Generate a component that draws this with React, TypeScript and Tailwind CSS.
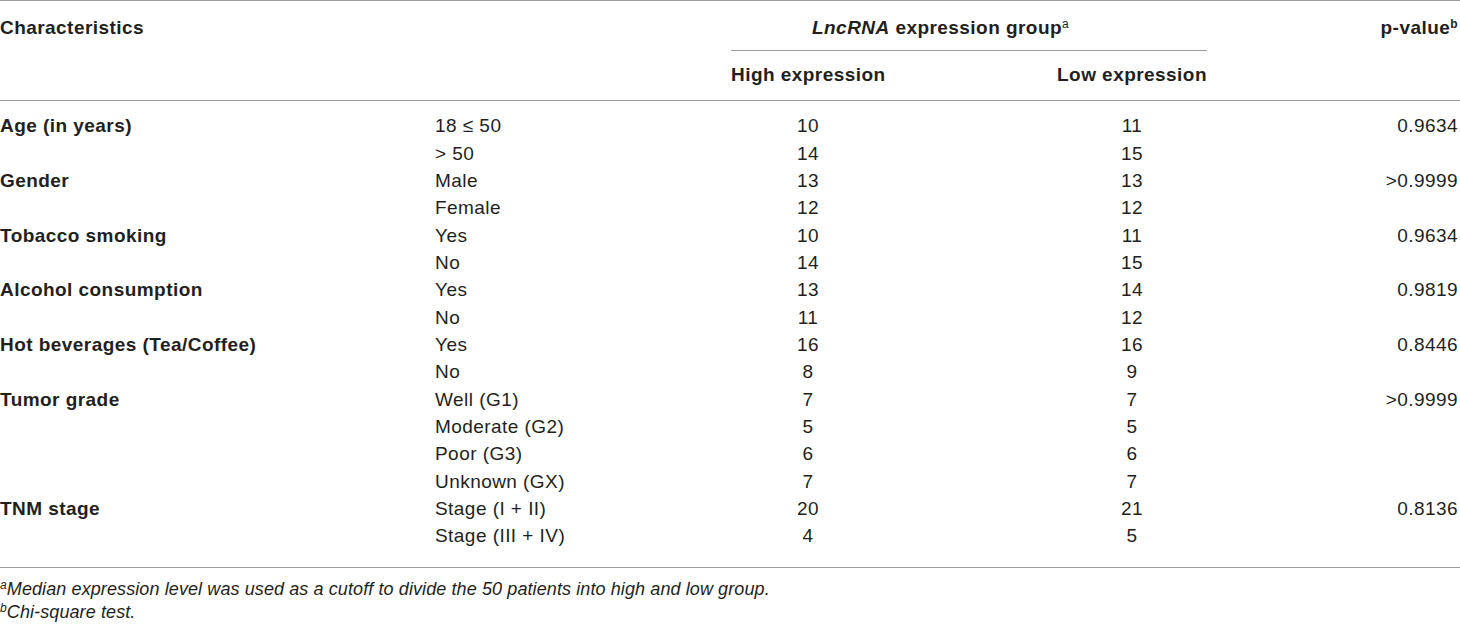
import React from "react";

type Row = { label?: string; sub: string; hi: string; lo: string; p?: string };

const rows: Row[] = [
  { label: "Age (in years)", sub: "18 \u2264 50", hi: "10", lo: "11", p: "0.9634" },
  { sub: "> 50", hi: "14", lo: "15" },
  { label: "Gender", sub: "Male", hi: "13", lo: "13", p: ">0.9999" },
  { sub: "Female", hi: "12", lo: "12" },
  { label: "Tobacco smoking", sub: "Yes", hi: "10", lo: "11", p: "0.9634" },
  { sub: "No", hi: "14", lo: "15" },
  { label: "Alcohol consumption", sub: "Yes", hi: "13", lo: "14", p: "0.9819" },
  { sub: "No", hi: "11", lo: "12" },
  { label: "Hot beverages (Tea/Coffee)", sub: "Yes", hi: "16", lo: "16", p: "0.8446" },
  { sub: "No", hi: "8", lo: "9" },
  { label: "Tumor grade", sub: "Well (G1)", hi: "7", lo: "7", p: ">0.9999" },
  { sub: "Moderate (G2)", hi: "5", lo: "5" },
  { sub: "Poor (G3)", hi: "6", lo: "6" },
  { sub: "Unknown (GX)", hi: "7", lo: "7" },
  { label: "TNM stage", sub: "Stage (I + II)", hi: "20", lo: "21", p: "0.8136" },
  { sub: "Stage (III + IV)", hi: "4", lo: "5" },
];

export default function App() {
  return (
    <div
      className="w-[1460px] h-[625px] bg-white text-[#231f20] text-[19px] tracking-[0.45px] overflow-hidden whitespace-nowrap"
      style={{ fontFamily: '"Liberation Sans", Arial, sans-serif' }}
    >
      <div className="border-t border-[#9d9d9d]">
        {/* header row 1 */}
        <div className="flex h-[49px] items-center pt-[5px] font-bold">
          <div className="w-[812px] shrink-0">Characteristics</div>
          <div className="w-[560px] shrink-0">
            <span className="italic">LncRNA</span> expression group
            <sup className="text-[12px] font-normal">a</sup>
          </div>
          <div className="flex-1 text-right pr-[2px]">
            p-value<sup className="text-[12px]">b</sup>
          </div>
        </div>
        {/* header row 2 */}
        <div className="flex font-bold">
          <div className="w-[731px] shrink-0" />
          <div className="w-[476px] shrink-0 border-t border-[#9d9d9d] flex h-[50px] items-center">
            <div className="w-[154px] shrink-0 text-center">High expression</div>
            <div className="w-[172px] shrink-0" />
            <div className="w-[150px] shrink-0 text-center">Low expression</div>
          </div>
        </div>
      </div>
      <div className="border-t border-b border-[#9d9d9d] pt-[12px] pb-[17px]">
        {rows.map((r, i) => (
          <div key={i} className="flex h-[27.33px] items-center">
            <div className="w-[435px] shrink-0 font-bold">{r.label ?? ""}</div>
            <div className="w-[296px] shrink-0">{r.sub}</div>
            <div className="w-[154px] shrink-0 text-center">{r.hi}</div>
            <div className="w-[172px] shrink-0" />
            <div className="w-[150px] shrink-0 text-center">{r.lo}</div>
            <div className="flex-1 text-right pr-[2px]">{r.p ?? ""}</div>
          </div>
        ))}
      </div>
      <div className="pt-[10px] italic leading-[23px] tracking-[0.1px] text-[18px]">
        <div>
          <sup className="text-[12px]">a</sup>Median expression level was used as a cutoff to divide the 50 patients into high and low group.
        </div>
        <div>
          <sup className="text-[12px]">b</sup>Chi-square test.
        </div>
      </div>
    </div>
  );
}
